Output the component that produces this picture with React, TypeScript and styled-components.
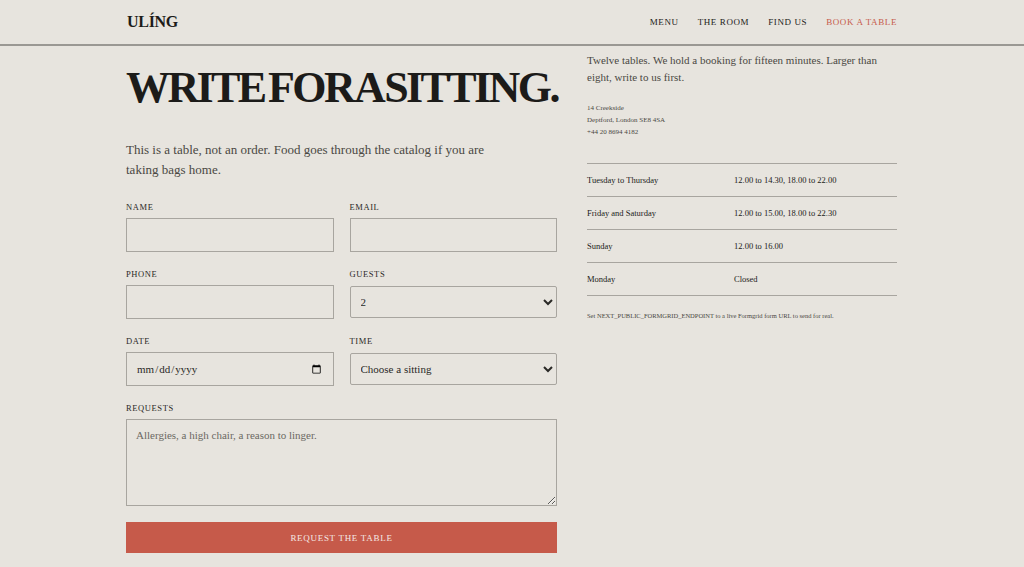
import React from 'react';
import styled, { createGlobalStyle } from 'styled-components';

const Global = createGlobalStyle`
  html, body { margin: 0; background: #e7e4de; }
  body { font-family: "Liberation Serif", "Times New Roman", serif; color: #1c1b19; }
  * { box-sizing: border-box; }
`;

const Header = styled.header`
  height: 46px;
  border-bottom: 2px solid #9a9893;
  display: flex;
  justify-content: space-between;
  align-items: center;
  padding: 0 127px 0 127px;
`;

const Logo = styled.div`
  font-weight: 700;
  font-size: 16px;
  letter-spacing: -0.3px;
  margin-top: 0;
`;

const Nav = styled.nav`
  display: flex;
  gap: 19px;
`;

const NavLink = styled.a<{ $active?: boolean }>`
  font-size: 9px;
  letter-spacing: 0.6px;
  color: ${p => (p.$active ? '#c65a4a' : '#1c1b19')};
  text-decoration: none;
`;

const Main = styled.main`
  display: grid;
  grid-template-columns: 431px 310px;
  gap: 30px;
  padding: 0 127px 0 126px;
`;

const Left = styled.section`
  padding-top: 20px;
`;

const Title = styled.h1`
  font-size: 44px;
  font-weight: 700;
  letter-spacing: -2.6px;
  word-spacing: -5px;
  white-space: nowrap;
  line-height: 1;
  margin: 0 0 30px;
`;

const Lede = styled.p`
  font-size: 13px;
  line-height: 20px;
  color: #4a4843;
  margin: 0 0 22px;
  max-width: 370px;
`;

const FormGrid = styled.form`
  display: grid;
  grid-template-columns: 1fr 1fr;
  column-gap: 16px;
  row-gap: 17px;
`;

const Field = styled.label<{ $wide?: boolean }>`
  display: flex;
  flex-direction: column;
  gap: 6px;
  grid-column: ${p => (p.$wide ? '1 / -1' : 'auto')};
`;

const Label = styled.span`
  font-size: 8.5px;
  letter-spacing: 0.6px;
  color: #2a2926;
`;

const Input = styled.input`
  height: 34px;
  border: 1px solid #a8a59f;
  background: #e7e4de;
  font-family: inherit;
  font-size: 11px;
  padding: 0 9px;
  color: #2a2926;
`;

const Select = styled.select`
  height: 32px;
  margin-top: 1px;
  border: 1px solid #a8a59f;
  border-radius: 2px;
  background: #e7e4de;
  font-family: inherit;
  font-size: 11px;
  padding: 0 6px;
  color: #2a2926;
`;

const TextArea = styled.textarea`
  height: 87px;
  border: 1px solid #a8a59f;
  background: #e7e4de;
  font-family: inherit;
  font-size: 11px;
  padding: 9px;
  resize: vertical;
  &::placeholder { color: #6b6963; }
`;

const Submit = styled.button`
  grid-column: 1 / -1;
  height: 31px;
  margin-top: -1px;
  border: none;
  background: #c65a4a;
  color: #f4e9e5;
  font-family: inherit;
  font-size: 9px;
  letter-spacing: 0.7px;
`;

const Right = styled.aside`
  padding-top: 6px;
`;

const Intro = styled.p`
  font-size: 11px;
  line-height: 17px;
  color: #4a4843;
  margin: 0 0 16px;
`;

const Address = styled.address`
  font-style: normal;
  font-size: 7px;
  line-height: 12px;
  color: #4a4843;
  margin-bottom: 25px;
`;

const Hours = styled.div`
  border-top: 1px solid #a8a59f;
`;

const HoursRow = styled.div`
  display: grid;
  grid-template-columns: 147px 1fr;
  height: 33px;
  align-items: center;
  font-size: 8.5px;
  border-bottom: 1px solid #a8a59f;
`;

const Note = styled.p`
  font-size: 6.5px;
  color: #4a4843;
  margin: 16px 0 0;
`;

const hours = [
  ['Tuesday to Thursday', '12.00 to 14.30, 18.00 to 22.00'],
  ['Friday and Saturday', '12.00 to 15.00, 18.00 to 22.30'],
  ['Sunday', '12.00 to 16.00'],
  ['Monday', 'Closed'],
];

const App: React.FC = () => (
  <>
    <Global />
    <Header>
      <Logo>ULÍNG</Logo>
      <Nav>
        <NavLink>MENU</NavLink>
        <NavLink>THE ROOM</NavLink>
        <NavLink>FIND US</NavLink>
        <NavLink $active>BOOK A TABLE</NavLink>
      </Nav>
    </Header>
    <Main>
      <Left>
        <Title>WRITE FOR A SITTING.</Title>
        <Lede>This is a table, not an order. Food goes through the catalog if you are taking bags home.</Lede>
        <FormGrid onSubmit={e => e.preventDefault()}>
          <Field><Label>NAME</Label><Input type="text" /></Field>
          <Field><Label>EMAIL</Label><Input type="email" /></Field>
          <Field><Label>PHONE</Label><Input type="tel" /></Field>
          <Field>
            <Label>GUESTS</Label>
            <Select defaultValue="2">
              {[1, 2, 3, 4, 5, 6, 7, 8].map(n => <option key={n}>{n}</option>)}
            </Select>
          </Field>
          <Field><Label>DATE</Label><Input type="date" lang="en-GB" /></Field>
          <Field>
            <Label>TIME</Label>
            <Select defaultValue="">
              <option value="">Choose a sitting</option>
            </Select>
          </Field>
          <Field $wide>
            <Label>REQUESTS</Label>
            <TextArea placeholder="Allergies, a high chair, a reason to linger." />
          </Field>
          <Submit type="submit">REQUEST THE TABLE</Submit>
        </FormGrid>
      </Left>
      <Right>
        <Intro>Twelve tables. We hold a booking for fifteen minutes. Larger than eight, write to us first.</Intro>
        <Address>
          14 Creekside<br />Deptford, London SE8 4SA<br />+44 20 8694 4182
        </Address>
        <Hours>
          {hours.map(([d, t]) => (
            <HoursRow key={d}><span>{d}</span><span>{t}</span></HoursRow>
          ))}
        </Hours>
        <Note>Set NEXT_PUBLIC_FORMGRID_ENDPOINT to a live Formgrid form URL to send for real.</Note>
      </Right>
    </Main>
  </>
);

export default App;
